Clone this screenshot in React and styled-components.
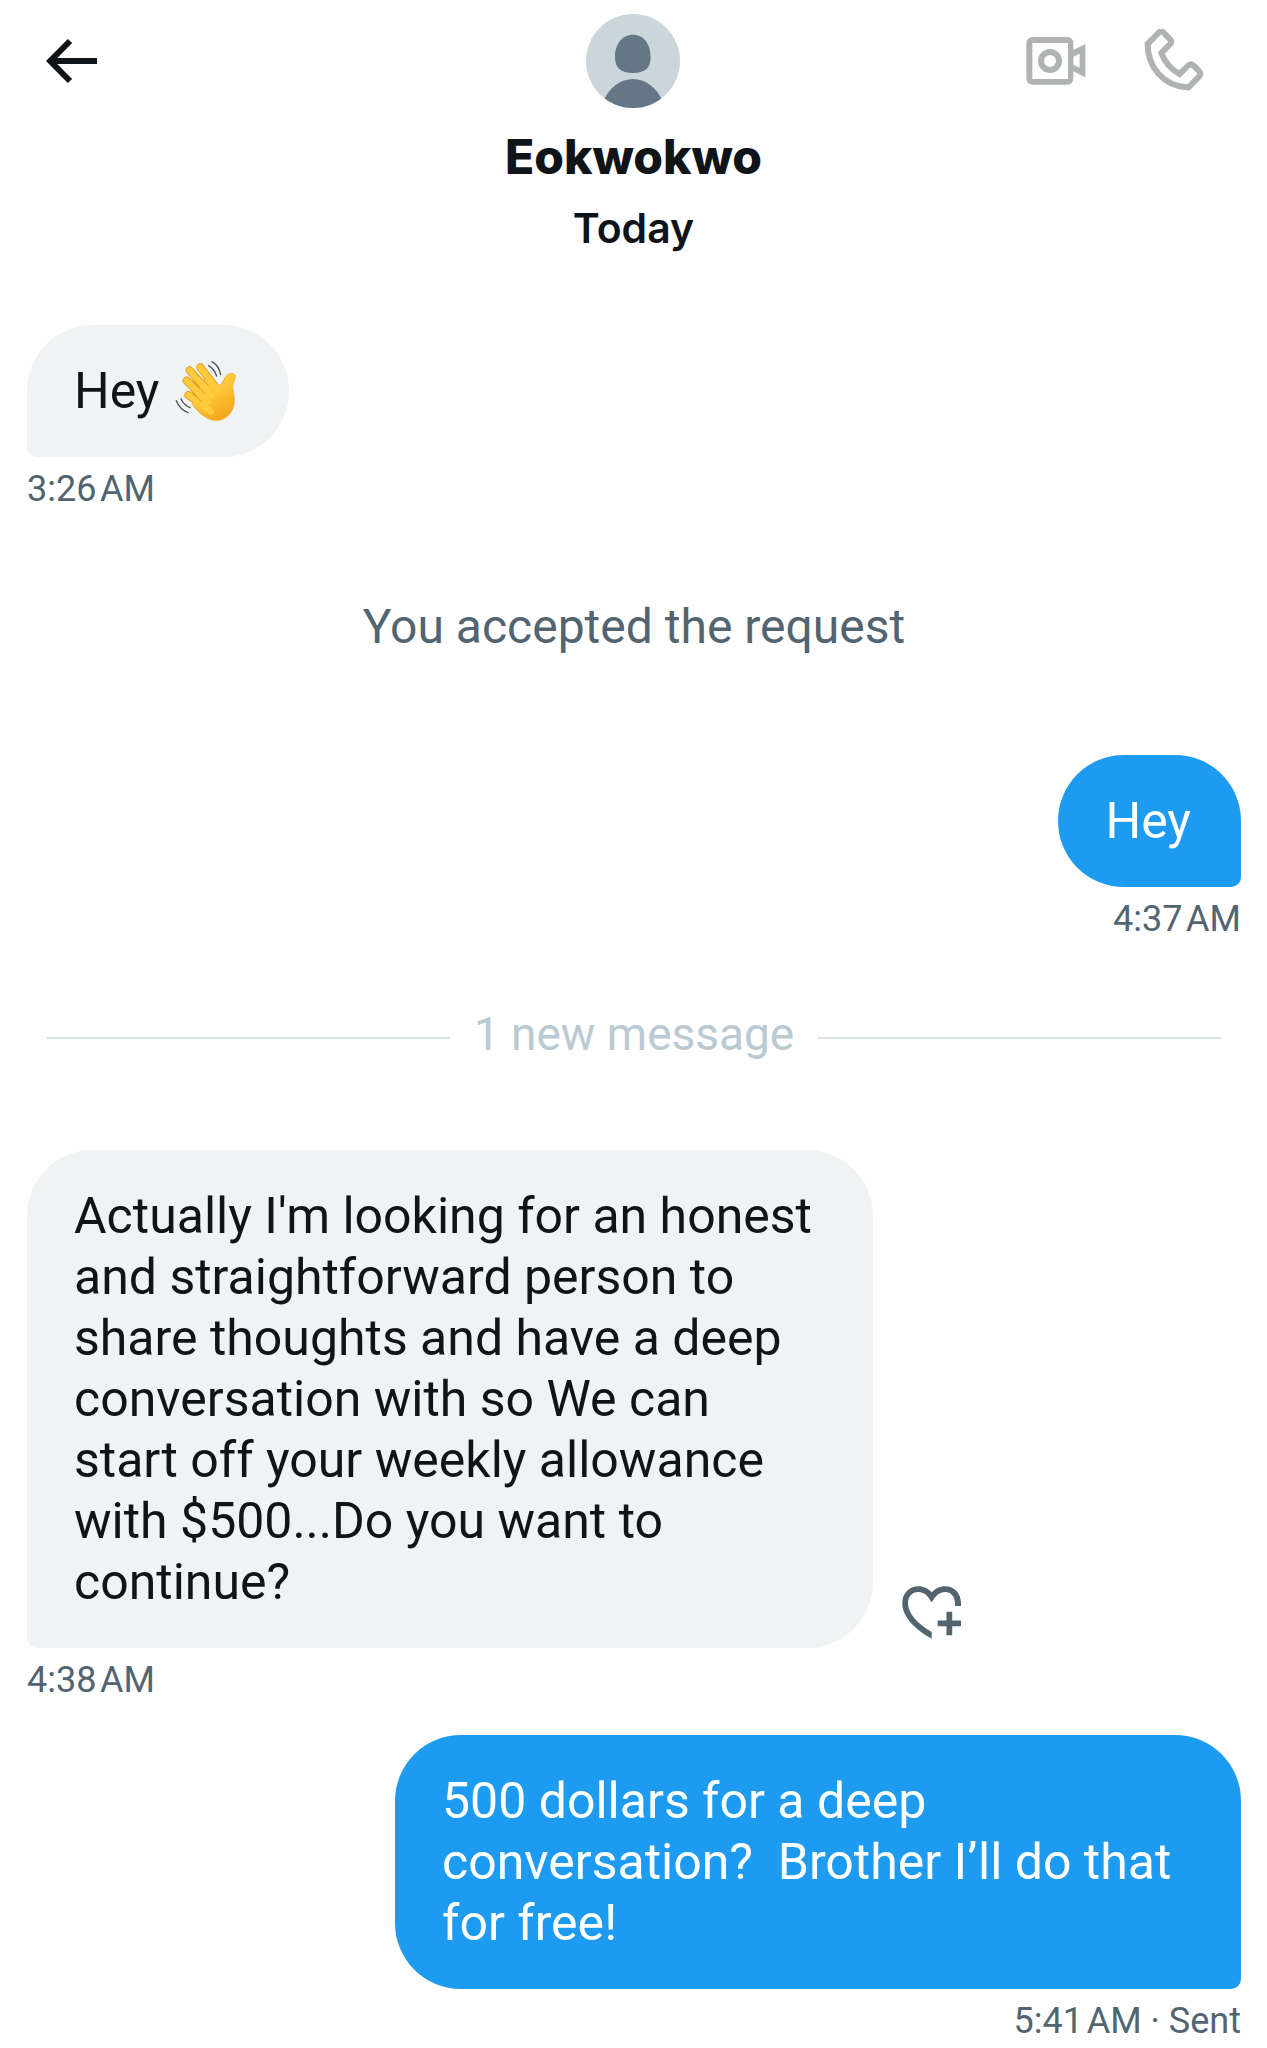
import React from "react";
import styled, { createGlobalStyle } from "styled-components";

const GlobalStyle = createGlobalStyle`
  * { box-sizing: border-box; }
  body {
    margin: 0;
    background: #fefefe;
    color: #0f1419;
    font-family: Roboto, "Liberation Sans", sans-serif;
  }
`;

const Page = styled.div`
  min-height: 100vh;
  overflow-x: hidden;
`;

const Header = styled.header`
  display: grid;
  grid-template-columns: 1fr auto 1fr;
  align-items: start;
  padding: 14px 46px 0;
`;

const Actions = styled.div`
  display: flex;
  align-items: center;
  justify-content: ${(p) => (p.$end ? "flex-end" : "flex-start")};
  gap: 58px;
  height: 94px;
  padding-right: ${(p) => (p.$end ? "17px" : "0")};
`;

const IconButton = styled.button`
  display: flex;
  flex: none;
  padding: 0;
  border: 0;
  background: none;
  color: ${(p) => p.$color};
  cursor: pointer;
`;

const ReactionButton = styled(IconButton)`
  padding-bottom: 8px;
`;

const Contact = styled.div`
  display: flex;
  flex-direction: column;
  align-items: center;
`;

const Name = styled.h1`
  margin: 19px 0 0;
  font-family: Inter, sans-serif;
  font-size: 48px;
  line-height: 60px;
  font-weight: 800;
`;

const Day = styled.h2`
  margin: 0;
  padding-top: 17px;
  text-align: center;
  font-family: Inter, sans-serif;
  font-size: 41px;
  line-height: 48px;
  font-weight: 600;
`;

const Thread = styled.main`
  display: flex;
  flex-direction: column;
  padding: 73px 26px 0 27px;
`;

const Message = styled.article`
  display: flex;
  flex-direction: column;
  align-items: ${(p) => (p.$mine ? "flex-end" : "flex-start")};
  margin-bottom: 33px;
`;

const BubbleRow = styled.div`
  display: flex;
  align-items: flex-end;
  justify-content: ${(p) => (p.$mine ? "flex-end" : "flex-start")};
  gap: 29px;
  width: 100%;
`;

const Bubble = styled.p`
  max-width: 846px;
  margin: 0;
  padding: 36px 50px 35px 47px;
  border-radius: ${(p) => (p.$mine ? "66px 66px 10px 66px" : "66px 66px 66px 10px")};
  background: ${(p) => (p.$mine ? "#1d9bf0" : "#eff3f4")};
  color: ${(p) => (p.$mine ? "#fff" : "#0f1419")};
  font-size: 50px;
  line-height: 61px;
  white-space: pre-wrap;
`;

const Time = styled.div`
  margin-top: 10px;
  color: #536471;
  font-size: 36px;
  line-height: 44px;
`;

const Notice = styled.p`
  margin: 53px 0 98px;
  text-align: center;
  color: #536471;
  font-size: 48px;
  line-height: 60px;
`;

const Divider = styled.div`
  display: flex;
  align-items: center;
  gap: 24px;
  margin: 30px 20px 78px;
  color: #b9cad3;

  &::before,
  &::after {
    content: "";
    flex: 1;
    height: 2px;
    background: #dbe3e6;
  }
`;

const DividerLabel = styled.span`
  padding-bottom: 8px;
  font-size: 46px;
  line-height: 60px;
`;

const WaveSvg = styled.svg`
  margin: -8px 2px -8px 3px;
  vertical-align: -6px;
`;

const BackIcon = () => (
  <svg width="52" height="46" viewBox="46 38 52 46" fill="none" stroke="currentColor" strokeWidth="6" aria-hidden="true">
    <path d="M70 41 50.2 61 70 81M50.2 61H97" />
  </svg>
);

const VideoIcon = () => (
  <svg width="60" height="50" viewBox="137 108 180 150" fill="none" stroke="currentColor" aria-hidden="true">
    <path
      fill="currentColor"
      stroke="none"
      fillRule="evenodd"
      d="M158 111H259Q279 111 279 131V150L315 132V232L279 214V234Q279 254 259 254H158Q138 254 138 234V131Q138 111 158 111ZM156 129V237H263V129ZM279 170V194L298 203V161Z"
    />
    <circle cx="209" cy="183" r="27" strokeWidth="18" />
  </svg>
);

const PhoneIcon = () => (
  <svg width="60" height="64" viewBox="490 86 180 192" fill="none" stroke="currentColor" strokeWidth="18" aria-hidden="true">
    <path d="M501 131 533 98Q541 89 550 98L568 117Q575 125 567 133L542 158C552 184 570 207 597 221L621 197Q630 188 640 197L655 212Q663 221 655 229L626 259Q623 262 618 261C550 255 501 203 501 131Z" />
  </svg>
);

const HeartPlusIcon = () => (
  <svg width="60" height="54" viewBox="22 34 60 54" fill="currentColor" aria-hidden="true">
    <path d="M51.7 86.7C34 77 22.3 64 22.3 51.5 22.3 41 29 34.3 38.5 34.3 44 34.3 48.5 36.8 51.7 40.5 55 36.8 59.5 34.3 65 34.3 74.5 34.3 81 41 81 51.5V54H75V51.5C75 44.5 71 40 65 40 59.5 40 56 43.5 51.7 50.3 47.5 43.5 44 40 38.5 40 32 40 28 44.5 28 51.5 28 61 37 71.5 51.7 80Z" />
    <path d="M66.5 59.7H72.2V68.5H81V74.2H72.2V83.3H66.5V74.2H57.7V68.5H66.5Z" />
  </svg>
);

const Avatar = () => (
  <svg width="94" height="94" viewBox="381 42 282 282" role="img" aria-label="Eokwokwo">
    <clipPath id="avatar-circle">
      <circle cx="522" cy="183" r="141" />
    </clipPath>
    <g clipPath="url(#avatar-circle)">
      <path fill="#cbd6db" d="M381 42H663V324H381Z" />
      <path
        fill="#657786"
        d="M522 104C555 104 575 132 575 172 575 205 558 219 522 219S468 205 468 172C468 132 489 104 522 104ZM436 298C452 262 485 237 522 237S592 262 608 298V324H436Z"
      />
    </g>
  </svg>
);

const fingers = "M603 167 655 235M571 176 635 250M562 207 625 270M567 250 635 300";

const WavingHand = () => (
  <WaveSvg width="62" height="62" viewBox="527 145 186 186" fill="none" strokeLinecap="round" role="img" aria-label="waving hand">
    <defs>
      <linearGradient id="palm" x1="0" y1="0" x2="0.5" y2="1">
        <stop offset="0.4" stopColor="#ffcd3f" />
        <stop offset="1" stopColor="#f4a91f" />
      </linearGradient>
    </defs>
    <path stroke="#e39a1b" strokeWidth="24" d={fingers} />
    <path
      fill="url(#palm)"
      stroke="#e8a220"
      strokeWidth="2"
      d="M610 205C628 200 643 226 658 222 672 218 673 197 684 190 695 182 709 185 708 196 707 205 700 211 700 226 702 248 710 267 700 292 690 316 667 328 646 326 622 323 599 306 580 280Z"
    />
    <path stroke="#ffcb3c" strokeWidth="19" d={fingers} />
    <path stroke="#e39a1b" strokeWidth="3" d="M588 180 627 222M580 205 614 244M577 240 604 268" />
    <path stroke="#4b5054" strokeWidth="4" d="M628 162C640 169 647 179 652 193M638 150C653 159 661 172 664 189M545 262C551 274 559 283 572 288M531 267C538 284 549 296 566 303" />
  </WaveSvg>
);

export default function App() {
  return (
    <Page>
      <GlobalStyle />
      <Header>
        <Actions>
          <IconButton type="button" aria-label="Back" $color="#0f1419">
            <BackIcon />
          </IconButton>
        </Actions>
        <Contact>
          <Avatar />
          <Name>Eokwokwo</Name>
        </Contact>
        <Actions $end>
          <IconButton type="button" aria-label="Video call" $color="#afb3b4">
            <VideoIcon />
          </IconButton>
          <IconButton type="button" aria-label="Voice call" $color="#afb3b4">
            <PhoneIcon />
          </IconButton>
        </Actions>
      </Header>
      <Day>Today</Day>
      <Thread>
        <Message>
          <BubbleRow>
            <Bubble>
              Hey <WavingHand />
            </Bubble>
          </BubbleRow>
          <Time>3:26{"\u200A"}AM</Time>
        </Message>
        <Notice>You accepted the request</Notice>
        <Message $mine>
          <BubbleRow $mine>
            <Bubble $mine>Hey</Bubble>
          </BubbleRow>
          <Time>4:37{"\u200A"}AM</Time>
        </Message>
        <Divider>
          <DividerLabel>1 new message</DividerLabel>
        </Divider>
        <Message>
          <BubbleRow>
            <Bubble>
              Actually I'm looking for an honest and straightforward person to share thoughts and have a deep
              {" "}conversation with so We can start off your weekly allowance with $500...Do you want to continue?
            </Bubble>
            <ReactionButton type="button" aria-label="Add reaction" $color="#536471">
              <HeartPlusIcon />
            </ReactionButton>
          </BubbleRow>
          <Time>4:38{"\u200A"}AM</Time>
        </Message>
        <Message $mine>
          <BubbleRow $mine>
            <Bubble $mine>{"500 dollars for a deep conversation?  Brother I’ll do that for free!"}</Bubble>
          </BubbleRow>
          <Time>5:41{"\u200A"}AM · Sent</Time>
        </Message>
      </Thread>
    </Page>
  );
}
